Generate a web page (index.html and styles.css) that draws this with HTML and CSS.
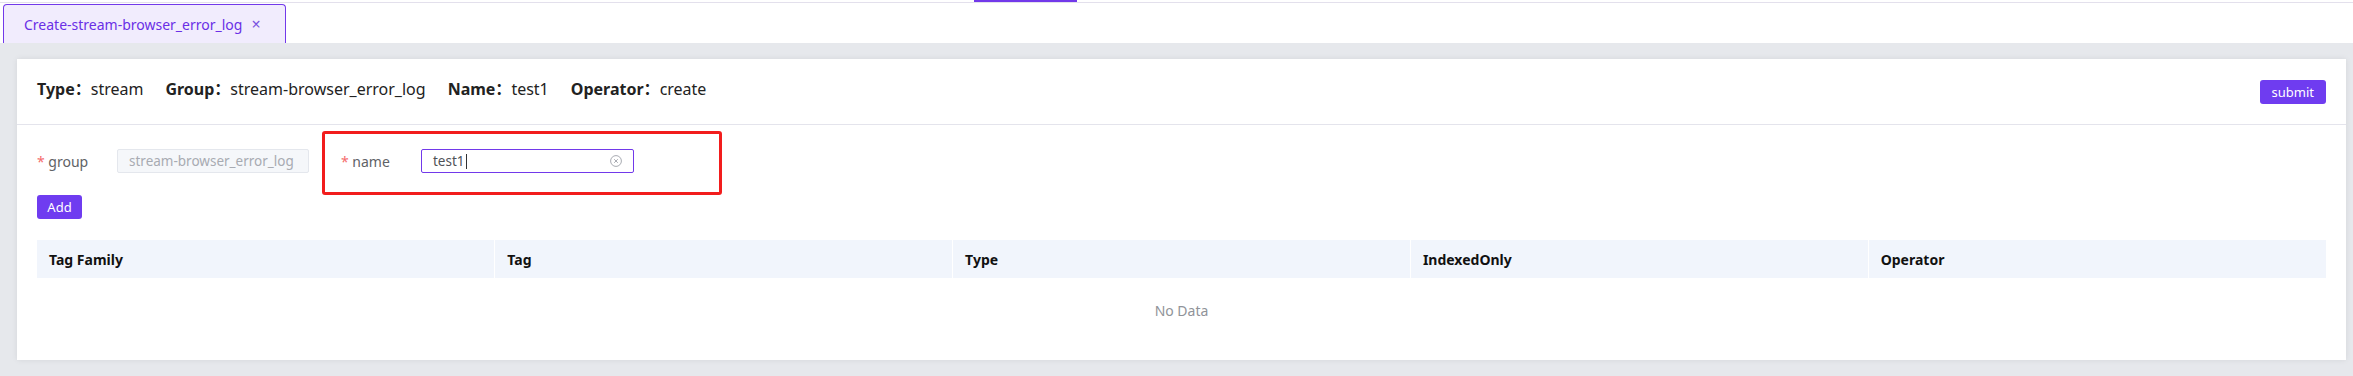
FILE: index.html
```html
<!DOCTYPE html>
<html>
<head>
<title>Create stream</title>
<link rel="stylesheet" href="styles.css">
</head>
<body>

<div class="nav-edge"><span class="nav-active"></span></div>

<div class="tabs">
  <div class="tab">Create-stream-browser_error_log <span class="tab-close">×</span></div>
</div>

<main class="workspace">
  <section class="card">
    <header class="card-head">
      <div class="meta">
        <span class="meta-item"><b>Type：</b>stream</span>
        <span class="meta-item"><b>Group：</b>stream-browser_error_log</span>
        <span class="meta-item"><b>Name：</b>test1</span>
        <span class="meta-item"><b>Operator：</b>create</span>
      </div>
      <button class="btn">submit</button>
    </header>

    <div class="card-body">
      <form class="inline-form">
        <div class="form-item">
          <label class="form-label"><i>*</i> group</label>
          <input class="input input-disabled" type="text" value="stream-browser_error_log" disabled>
        </div>
        <div class="form-item highlighted">
          <label class="form-label"><i>*</i> name</label>
          <div class="input input-focus">
            <span class="input-text">test1</span><span class="caret"></span>
            <svg class="clear-icon" viewBox="0 0 12 12" width="12" height="12">
              <circle cx="6" cy="6" r="5.4" fill="none" stroke="#a8abb2" stroke-width="1"/>
              <path d="M4.2 4.2 L7.8 7.8 M7.8 4.2 L4.2 7.8" stroke="#a8abb2" stroke-width="1"/>
            </svg>
          </div>
          <span class="mark"></span>
        </div>
      </form>

      <button class="btn btn-add">Add</button>

      <table class="tag-table">
        <thead>
          <tr>
            <th>Tag Family</th>
            <th>Tag</th>
            <th>Type</th>
            <th>IndexedOnly</th>
            <th>Operator</th>
          </tr>
        </thead>
        <tbody>
          <tr><td class="empty" colspan="5">No Data</td></tr>
        </tbody>
      </table>
    </div>
  </section>
</main>

</body>
</html>
```

FILE: styles.css
```css
html, body {
  margin: 0;
  height: 100%;
}
body {
  font-family: "Noto Sans", "Noto Sans CJK SC", sans-serif;
  color: #303133;
  background: #fff;
  display: flex;
  flex-direction: column;
}
.nav-edge {
  height: 2px;
  border-bottom: 1px solid #e3e0ec;
  display: flex;
}
.nav-active {
  margin-left: 974px;
  width: 103px;
  background: #7239ea;
}
.tabs {
  height: 40px;
  display: flex;
  align-items: flex-end;
  padding-left: 3px;
}
.tab {
  height: 39px;
  width: 283px;
  box-sizing: border-box;
  border: 1px solid #7239ea;
  border-bottom: none;
  border-radius: 4px 4px 0 0;
  background: #f1ecfd;
  color: #6a2fe6;
  font-size: 14px;
  display: flex;
  align-items: center;
  padding-left: 20px;
}
.tab-close {
  margin-left: 9px;
  font-size: 16px;
  color: #7a55e0;
}
.workspace {
  flex: 1;
  background: #e6e8ec;
  padding: 16px 7px 16px 17px;
}
.card {
  background: #fff;
  box-shadow: 0 0 6px rgba(0, 0, 0, 0.08);
  height: 301px;
  display: flex;
  flex-direction: column;
}
.card-head {
  height: 65px;
  border-bottom: 1px solid #e4e4ec;
  display: flex;
  align-items: center;
  justify-content: space-between;
  padding: 0 20px;
}
.meta {
  display: flex;
  gap: 22px;
  font-size: 16px;
  color: #222;
  margin-top: -8px;
}
.meta-item b {
  font-weight: 700;
}
.btn {
  background: #6f3cf0;
  color: #fff;
  border: none;
  border-radius: 3px;
  height: 24px;
  padding: 0 12px;
  font-family: inherit;
  font-size: 13px;
  cursor: pointer;
}
.card-body {
  padding: 24px 20px 0 20px;
  display: flex;
  flex-direction: column;
  align-items: flex-start;
}
.inline-form {
  display: flex;
  gap: 32px;
}
.form-item {
  display: flex;
  align-items: center;
  height: 24px;
  position: relative;
}
.form-label {
  width: 80px;
  font-size: 14px;
  color: #606266;
}
.form-label i {
  font-style: normal;
  color: #f56c6c;
}
.input {
  height: 24px;
  box-sizing: border-box;
  border-radius: 2px;
  font-family: inherit;
  font-size: 13.5px;
  padding: 0 11px;
}
.input-disabled {
  width: 192px;
  border: 1px solid #e4e7ed;
  background: #f5f7fa;
  color: #a8abb2;
}
.input-focus {
  width: 213px;
  border: 1px solid #7239ea;
  display: flex;
  align-items: center;
  color: #505257;
}
.caret {
  width: 1px;
  height: 15px;
  background: #303133;
  margin-left: 1px;
}
.clear-icon {
  margin-left: auto;
}
.highlighted .mark {
  position: absolute;
  left: -19px;
  top: -18px;
  width: 400px;
  height: 64px;
  box-sizing: border-box;
  border: 3px solid #f21d1d;
  border-radius: 3px;
}
.btn-add {
  margin-top: 22px;
  width: 45px;
  padding: 0;
}
.tag-table {
  margin-top: 21px;
  width: 100%;
  border-collapse: collapse;
  table-layout: fixed;
}
.tag-table th {
  background: #f1f5fc;
  height: 38px;
  text-align: left;
  padding: 0 12px;
  font-size: 14px;
  font-weight: 700;
  color: #111;
  border-left: 1px solid #fff;
}
.tag-table th:first-child {
  border-left: none;
}
.empty {
  height: 62px;
  text-align: center;
  font-size: 14px;
  color: #909399;
}
```
